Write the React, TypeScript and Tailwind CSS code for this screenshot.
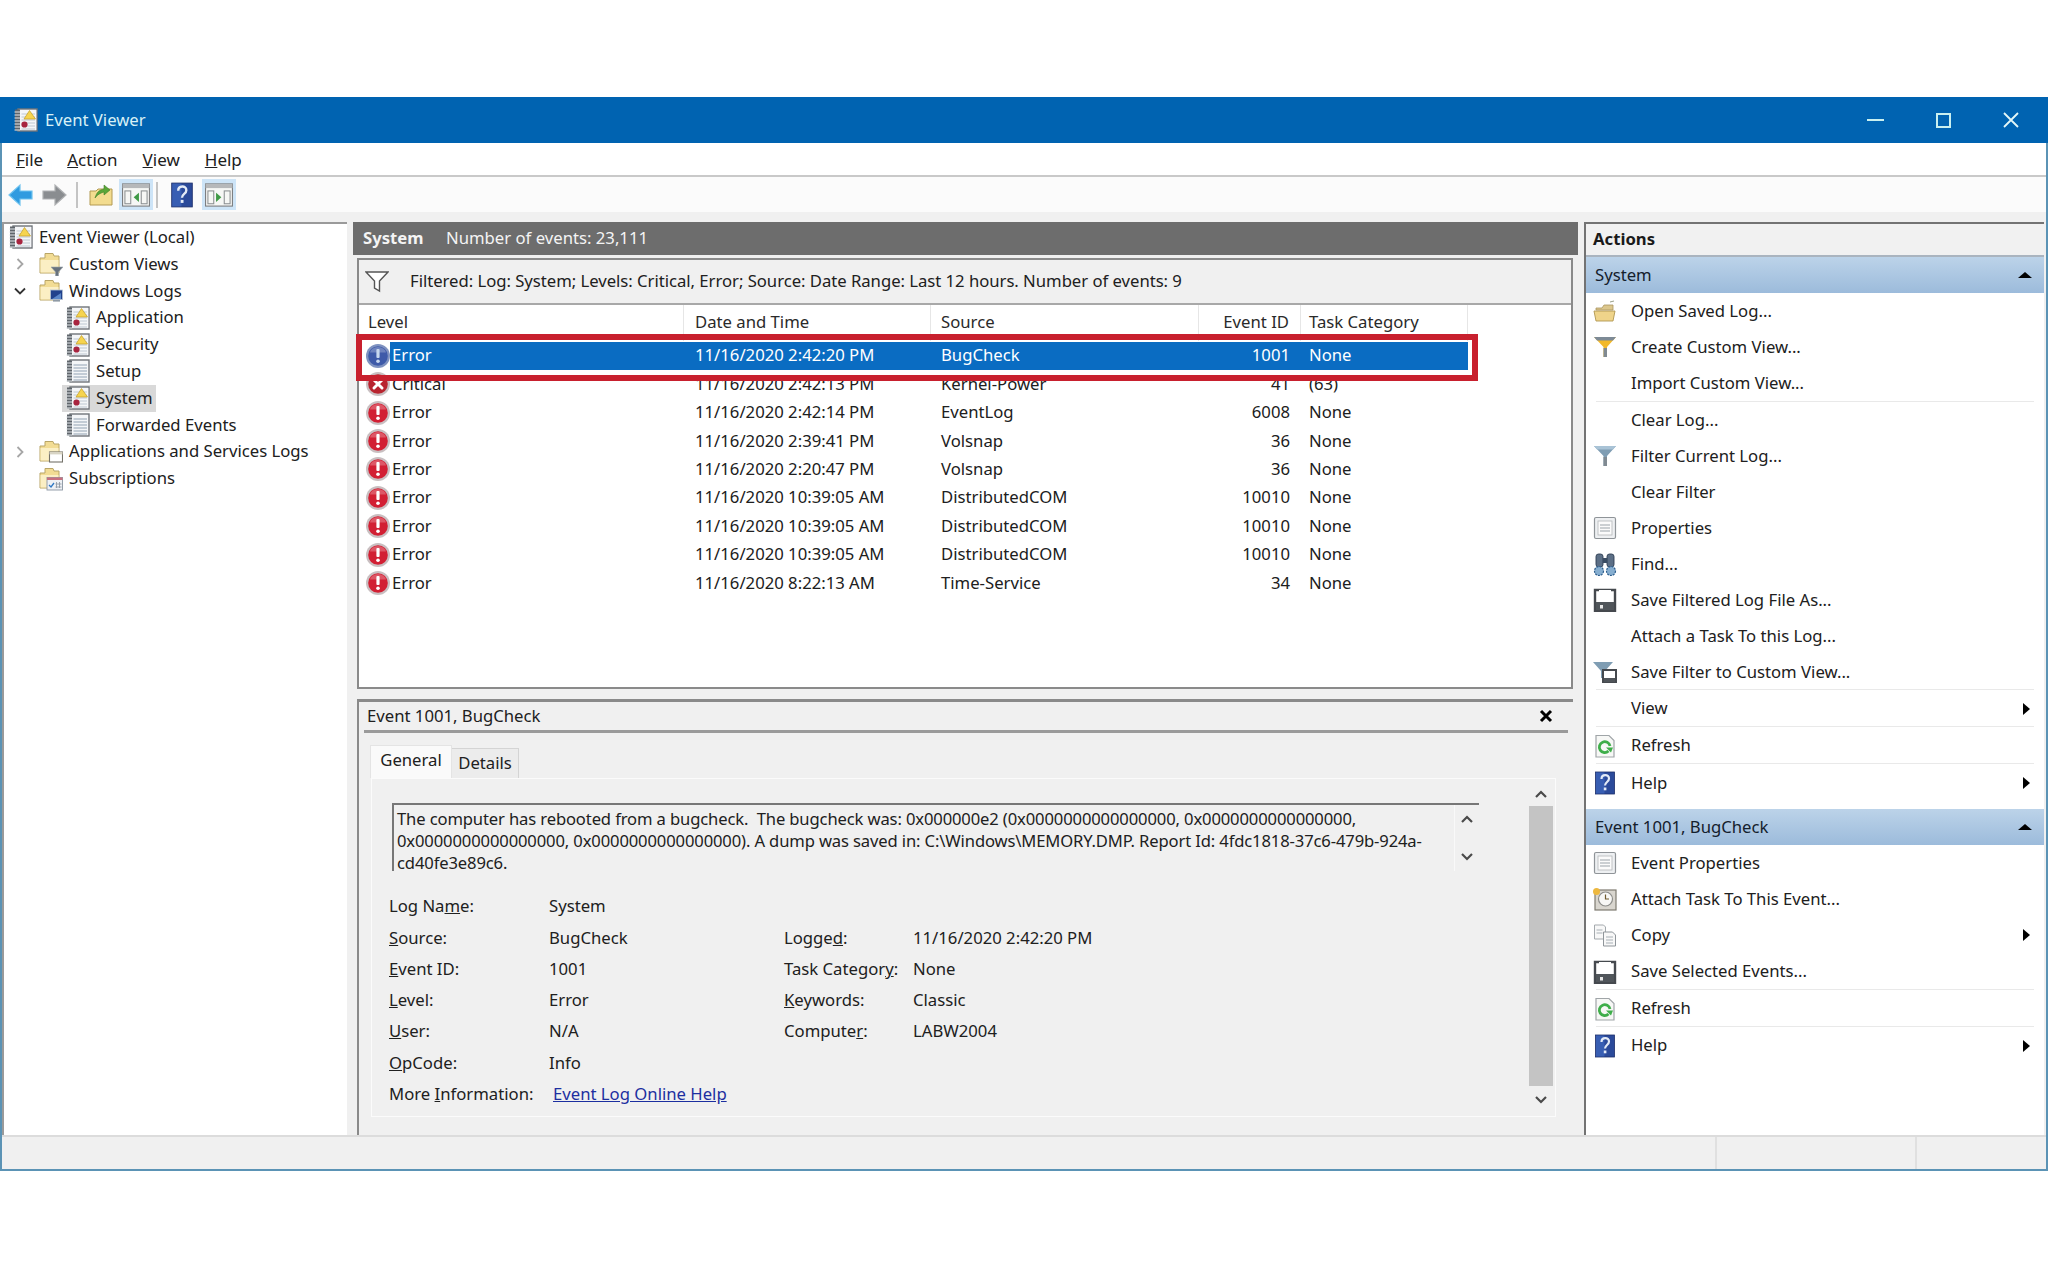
import type { ReactNode } from "react";

const FONT = "font-['Noto_Sans',sans-serif]";

function Svg({ size = 24, children }: { size?: number; children: ReactNode }) {
  return (
    <svg width={size} height={size} viewBox="0 0 24 24" className="shrink-0">
      {children}
    </svg>
  );
}

// Notebook with spiral on the left. "badge" adds the warning triangle and red dot.
function LogIcon({ badge = false, size = 24 }: { badge?: boolean; size?: number }) {
  return (
    <Svg size={size}>
      <rect x="4" y="1" width="19" height="22" fill="#f4f6f8" stroke="#6f7479" strokeWidth="1.4" />
      <rect x="1" y="1.5" width="5" height="21" fill="#5f656b" />
      {[4, 7, 10, 13, 16, 19, 22].map((y) => (
        <line key={y} x1="0.5" y1={y} x2="6" y2={y} stroke="#d8dde0" strokeWidth="1.1" />
      ))}
      {[6, 9, 12, 15, 18, 21].map((y) => (
        <line key={y} x1="7.5" y1={y} x2="21" y2={y} stroke="#a2b1bf" strokeWidth="1.2" />
      ))}
      {badge && (
        <>
          <rect x="7" y="2" width="15.5" height="20" fill="#f4f6f8" opacity="0.45" />
          <polygon points="15.5,2.5 21.5,11 10,11" fill="#f6d44f" stroke="#c29c25" strokeWidth="0.7" />
          <circle cx="10.5" cy="16.5" r="3.1" fill="#a82540" />
        </>
      )}
    </Svg>
  );
}

function FolderBase() {
  return (
    <>
      <path d="M6 1.5h8l1 2.5h5v17H1V6h5z" fill="#f2dc94" stroke="#b9a566" strokeWidth="1" />
      <path d="M1.5 8h18v12.5h-18z" fill="#fbefc4" />
    </>
  );
}

function FolderIcon({ kind }: { kind: "filter" | "monitor" | "window" | "cal" }) {
  return (
    <Svg>
      <FolderBase />
      {kind === "filter" && <polygon points="12,15 24,15 19.5,20 19.5,24 16.5,24 16.5,20" fill="#68727d" stroke="#9aa4ad" strokeWidth="0.6" />}
      {kind === "monitor" && (
        <>
          <rect x="11.5" y="11" width="12" height="9.5" fill="#21418c" stroke="#b7c4d2" strokeWidth="0.8" />
          <polygon points="13,20 22,20 22,14" fill="#5b87c9" />
          <rect x="14" y="21" width="7" height="1.6" fill="#8f9aa5" />
        </>
      )}
      {kind === "window" && (
        <>
          <rect x="10.5" y="12" width="13" height="10" fill="#ffffff" stroke="#74726a" strokeWidth="1.1" />
          <rect x="10.5" y="12" width="13" height="2.4" fill="#d8d4c4" />
        </>
      )}
      {kind === "cal" && (
        <>
          <rect x="8" y="10.5" width="15.5" height="12.5" fill="#eef1f5" stroke="#8b96a2" strokeWidth="0.9" />
          <rect x="8" y="10.5" width="15.5" height="2.5" fill="#c8707f" />
          <path d="M10 18l2 2 3-4" fill="none" stroke="#2f78c4" strokeWidth="1.3" />
          <path d="M17.5 15v6M20.5 15v6M16.5 17h6M16.5 20h6" stroke="#909aa6" strokeWidth="0.9" />
        </>
      )}
    </Svg>
  );
}

function ErrorIcon({ selected = false }: { selected?: boolean }) {
  return (
    <Svg>
      <circle cx="12" cy="12" r="12" fill={selected ? "#7f92c0" : "#c9bfc1"} />
      <circle cx="12" cy="12" r="9.8" fill={selected ? "#3e5aa9" : "#d21f33"} />
      <path d="M12 3a9 6.5 0 0 1 8 5.5H4a9 6.5 0 0 1 8-5.5z" fill="#ffffff" opacity="0.25" />
      <rect x="10.4" y="5" width="3.2" height="9" rx="1" fill={selected ? "#c8d8ef" : "#ffffff"} />
      <circle cx="12" cy="17.3" r="1.8" fill={selected ? "#c8d8ef" : "#ffffff"} />
    </Svg>
  );
}

function CriticalIcon() {
  return (
    <Svg>
      <circle cx="12" cy="12" r="12" fill="#c9bfc1" />
      <circle cx="12" cy="12" r="9.8" fill="#b8242f" />
      <path d="M8 8l8 8M16 8l-8 8" stroke="#ffffff" strokeWidth="3" strokeLinecap="round" />
    </Svg>
  );
}

function HelpIcon({ size = 24 }: { size?: number }) {
  return (
    <Svg size={size}>
      <rect x="2.5" y="1" width="19" height="22" fill="#2b4a9a" stroke="#1d2f6a" strokeWidth="0.8" />
      <rect x="3" y="1.5" width="8.5" height="21" fill="#3f66bd" opacity="0.7" />
      <path d="M8.5 8c0-5 7.5-5 7.5-.5 0 3.5-4 3.5-4 7" fill="none" stroke="#e4ebf7" strokeWidth="2.2" />
      <rect x="10.8" y="16.5" width="2.6" height="2.8" fill="#e4ebf7" />
    </Svg>
  );
}

function PaneIcon({ side }: { side: "left" | "right" }) {
  return (
    <Svg size={28}>
      <rect x="0.5" y="2.5" width="23" height="19" fill="#f6f7f5" stroke="#77797a" strokeWidth="0.9" />
      <rect x="0.5" y="2.5" width="23" height="3.6" fill="#b6b8ba" />
      <rect x="2.5" y="8.5" width="5" height="11" fill="none" stroke="#8b9092" strokeWidth="0.9" />
      <rect x="16.5" y="8.5" width="5" height="11" fill="none" stroke="#8b9092" strokeWidth="0.9" />
      <polygon points={side === "left" ? "14.5,10 14.5,18 10,14" : "9.5,10 9.5,18 14,14"} fill="#3f9a46" />
    </Svg>
  );
}

function ArrowIcon({ dir }: { dir: "back" | "forward" }) {
  const back = dir === "back";
  return (
    <svg width="26" height="24" viewBox="0 0 26 24" className="shrink-0">
      <path
        d={back ? "M1 12L12 2v6h12v8H12v6z" : "M25 12L14 2v6H2v8h12v6z"}
        fill={back ? "#2f9be0" : "#8a8d90"}
        stroke={back ? "#6fc3ef" : "#b0b2b4"}
        strokeWidth="1.2"
      />
    </svg>
  );
}

function UpFolderIcon() {
  return (
    <Svg>
      <path d="M1 8h6l2-2h14v16H1z" fill="#f3dc8f" stroke="#b39a52" strokeWidth="1" />
      <path d="M6 15C8 8 11 7 15 6V2l6 5-6 5V9c-3 1-6 2-9 6z" fill="#5aa638" stroke="#3f7f28" strokeWidth="0.6" />
    </Svg>
  );
}

function FunnelIcon({ tone }: { tone: "yellow" | "blue" }) {
  return (
    <Svg>
      <polygon points="1,2 23,2 14,12 14,22 10.5,22 10.5,12" fill={tone === "yellow" ? "#f2b92b" : "#7f9db3"} />
      <polygon points="1,2 23,2 20,5.5 4,5.5" fill={tone === "yellow" ? "#7d8a96" : "#a9c3d6"} />
      <rect x="10.5" y="13" width="3.5" height="9" fill="#808a92" />
    </Svg>
  );
}

function OpenIcon() {
  return (
    <Svg>
      <path d="M3 9h6l2-3h9v5H3z" fill="#dcc78d" stroke="#a99560" strokeWidth="0.8" />
      <path d="M1 12h21l-2 10H3z" fill="#efd48a" stroke="#b09650" strokeWidth="0.9" />
      <path d="M17 3l4-1" stroke="#9aa08a" strokeWidth="1" />
    </Svg>
  );
}

function PropsIcon() {
  return (
    <Svg>
      <rect x="1.5" y="1.5" width="21" height="21" rx="1.5" fill="#eef0f2" stroke="#8f9498" strokeWidth="1.2" />
      <rect x="5" y="5" width="14" height="14" fill="#fbfbfb" stroke="#b3b7ba" strokeWidth="0.8" />
      <path d="M7 9h10M7 12h10M7 15h10" stroke="#9ba3aa" strokeWidth="1.1" />
    </Svg>
  );
}

function FindIcon() {
  return (
    <Svg>
      <rect x="3" y="2" width="7" height="13" rx="2.5" fill="#5c6f86" stroke="#2d3d52" strokeWidth="0.9" />
      <rect x="14" y="2" width="7" height="13" rx="2.5" fill="#5c6f86" stroke="#2d3d52" strokeWidth="0.9" />
      <rect x="10" y="6" width="4" height="5" fill="#3a4c62" />
      <circle cx="6" cy="19" r="4.5" fill="#86aed0" stroke="#2d5d8c" strokeWidth="1.2" strokeDasharray="2 1" />
      <circle cx="18" cy="19" r="4.5" fill="#86aed0" stroke="#2d5d8c" strokeWidth="1.2" strokeDasharray="2 1" />
    </Svg>
  );
}

function SaveIcon() {
  return (
    <Svg>
      <path d="M2 2h20v21H2z" fill="#ffffff" stroke="#45494e" strokeWidth="2.4" />
      <rect x="6" y="2" width="12" height="11" fill="#ffffff" />
      <rect x="3" y="14" width="18" height="8" fill="#50555a" />
      <rect x="7" y="17" width="3" height="3.5" fill="#e8e8e8" />
    </Svg>
  );
}

function SaveFilterIcon() {
  return (
    <Svg>
      <polygon points="0,2 20,2 12,11 12,18 8,18 8,11" fill="#7f9db3" />
      <rect x="10" y="10" width="13" height="12" fill="#ffffff" stroke="#45494e" strokeWidth="2" />
      <rect x="11" y="18" width="11" height="4" fill="#50555a" />
    </Svg>
  );
}

function RefreshIcon() {
  return (
    <Svg>
      <path d="M3 1.5h13l5 5V23H3z" fill="#f7f8f6" stroke="#a0a5a8" strokeWidth="1.2" />
      <path d="M17 12a5.4 5.4 0 1 0-1.5 5" fill="none" stroke="#3fae4a" strokeWidth="2.8" />
      <polygon points="13,13.5 20,13.5 18,18.5" fill="#3fae4a" />
    </Svg>
  );
}

function TaskIcon() {
  return (
    <Svg>
      <rect x="2" y="3" width="21" height="20" fill="#d9d6cf" stroke="#7e7a70" strokeWidth="1.2" />
      <circle cx="12.5" cy="12" r="7" fill="#f7f7f5" stroke="#8d8d8a" strokeWidth="1.2" />
      <path d="M12.5 7.5V12h3.5" fill="none" stroke="#705a2d" strokeWidth="1.2" />
      <circle cx="3.5" cy="4.5" r="3.5" fill="#edb83f" />
    </Svg>
  );
}

function CopyIcon() {
  return (
    <Svg>
      <path d="M1.5 2h9l2 2v12h-11z" fill="#f8f8f8" stroke="#a4a9ad" strokeWidth="1" />
      <path d="M10.5 9h9l3 3v11h-12z" fill="#f8f8f8" stroke="#8f959a" strokeWidth="1" />
      <path d="M3.5 7h6M3.5 10h6M13 14h7M13 17h7M13 20h7" stroke="#a8b0b6" strokeWidth="1" />
    </Svg>
  );
}

function CaretRight() {
  return <span className="ml-auto mr-[14px] h-0 w-0 border-y-[6px] border-l-[7px] border-y-transparent border-l-black" />;
}

function SectionHeader({ title }: { title: string }) {
  return (
    <div className="flex h-[36px] shrink-0 items-center justify-between bg-gradient-to-b from-[#bcd3e9] to-[#9cbbdb] pl-[9px] pr-[12px] text-[#14202c]">
      <span>{title}</span>
      <span className="h-0 w-0 border-x-[7px] border-b-[6px] border-x-transparent border-b-black" />
    </div>
  );
}

type Action = {
  label: string;
  icon?: ReactNode;
  sub?: boolean;
  h?: string;
  sep?: boolean;
};

const systemActions: Action[] = [
  { label: "Open Saved Log...", icon: <OpenIcon /> },
  { label: "Create Custom View...", icon: <FunnelIcon tone="yellow" /> },
  { label: "Import Custom View...", sep: true, h: "h-[37px]" },
  { label: "Clear Log..." },
  { label: "Filter Current Log...", icon: <FunnelIcon tone="blue" /> },
  { label: "Clear Filter" },
  { label: "Properties", icon: <PropsIcon /> },
  { label: "Find...", icon: <FindIcon /> },
  { label: "Save Filtered Log File As...", icon: <SaveIcon /> },
  { label: "Attach a Task To this Log..." },
  { label: "Save Filter to Custom View...", icon: <SaveFilterIcon />, sep: true },
  { label: "View", sub: true, sep: true, h: "h-[37px]" },
  { label: "Refresh", icon: <RefreshIcon />, sep: true, h: "h-[37px]" },
  { label: "Help", icon: <HelpIcon />, sub: true, h: "h-[45px] pb-[7px]" },
];

const eventActions: Action[] = [
  { label: "Event Properties", icon: <PropsIcon /> },
  { label: "Attach Task To This Event...", icon: <TaskIcon /> },
  { label: "Copy", icon: <CopyIcon />, sub: true },
  { label: "Save Selected Events...", icon: <SaveIcon />, sep: true, h: "h-[37px]" },
  { label: "Refresh", icon: <RefreshIcon />, sep: true, h: "h-[37px]" },
  { label: "Help", icon: <HelpIcon />, sub: true, h: "h-[37px]" },
];

function ActionRow({ a }: { a: Action }) {
  return (
    <div className={`relative flex shrink-0 items-center ${a.h ?? "h-[36px]"}`}>
      <span className="flex w-[45px] shrink-0 justify-start pl-[7px]">{a.icon}</span>
      <span className="whitespace-nowrap">{a.label}</span>
      {a.sub && <CaretRight />}
      {a.sep && <span className="absolute inset-x-[10px] bottom-0 h-px bg-[#e9e9e9]" />}
    </div>
  );
}

const rows = [
  { level: "Critical", date: "11/16/2020 2:42:13 PM", source: "Kernel-Power", id: "41", task: "(63)" },
  { level: "Error", date: "11/16/2020 2:42:14 PM", source: "EventLog", id: "6008", task: "None" },
  { level: "Error", date: "11/16/2020 2:39:41 PM", source: "Volsnap", id: "36", task: "None" },
  { level: "Error", date: "11/16/2020 2:20:47 PM", source: "Volsnap", id: "36", task: "None" },
  { level: "Error", date: "11/16/2020 10:39:05 AM", source: "DistributedCOM", id: "10010", task: "None" },
  { level: "Error", date: "11/16/2020 10:39:05 AM", source: "DistributedCOM", id: "10010", task: "None" },
  { level: "Error", date: "11/16/2020 10:39:05 AM", source: "DistributedCOM", id: "10010", task: "None" },
  { level: "Error", date: "11/16/2020 8:22:13 AM", source: "Time-Service", id: "34", task: "None" },
];

const GRID = "grid grid-cols-[325px_247px_268px_102px_167px]";

function Chevron({ open }: { open?: boolean }) {
  return (
    <svg width="14" height="14" viewBox="0 0 14 14" className="shrink-0">
      <path
        d={open ? "M2 4.5l5 5 5-5" : "M4.5 2l5 5-5 5"}
        fill="none"
        stroke={open ? "#333333" : "#a6a6a6"}
        strokeWidth="1.8"
      />
    </svg>
  );
}

function TreeRow({ children, icon, pl, chevron, active }: { children: ReactNode; icon: ReactNode; pl: string; chevron?: ReactNode; active?: boolean }) {
  return (
    <div className={`flex h-[26.8px] items-center ${pl}`}>
      {chevron && <span className="mr-[8px] flex w-[14px] justify-center">{chevron}</span>}
      <span className={`flex h-full items-center gap-[6px] pl-[4px] pr-[3px] ${active ? "bg-[#d9d9d9]" : ""}`}>
        {icon}
        <span className="whitespace-nowrap">{children}</span>
      </span>
    </div>
  );
}

function Field({ label, u, rest, value }: { label?: string; u: string; rest: string; value: string }) {
  return (
    <>
      <span className="whitespace-nowrap">
        {label}
        <u>{u}</u>
        {rest}
      </span>
      <span className="whitespace-nowrap">{value}</span>
    </>
  );
}

function ScrollArrow({ up }: { up?: boolean }) {
  return (
    <svg width="14" height="10" viewBox="0 0 14 10">
      <path d={up ? "M2 8l5-5 5 5" : "M2 2l5 5 5-5"} fill="none" stroke="#4a4a4a" strokeWidth="2.2" />
    </svg>
  );
}

export default function App() {
  return (
    <div className={`h-[1268px] bg-white pt-[97px] text-[16.7px] leading-none text-[#202020] ${FONT}`}>
      <div className="flex h-[1074px] flex-col border-b-2 border-l-2 border-r-2 border-[#5b93b5] bg-[#f0f0f0]">
        {/* title bar */}
        <div className="-mx-[2px] flex h-[46px] shrink-0 items-center bg-[#0063b1] pl-[14px] pr-[3px] text-[#d8f1f6]">
          <LogIcon badge size={24} />
          <span className="ml-[7px]">Event Viewer</span>
          <div className="ml-auto flex">
            <span className="flex h-[46px] w-[68px] items-center justify-center">
              <span className="h-[2px] w-[17px] bg-[#c9f0f0]" />
            </span>
            <span className="flex h-[46px] w-[68px] items-center justify-center">
              <span className="h-[15px] w-[15px] border-2 border-[#c9f0f0]" />
            </span>
            <span className="flex h-[46px] w-[68px] items-center justify-center">
              <svg width="16" height="16" viewBox="0 0 16 16">
                <path d="M1 1l14 14M15 1L1 15" stroke="#e4f7f7" strokeWidth="1.8" />
              </svg>
            </span>
          </div>
        </div>

        {/* menu */}
        <div className="flex h-[34px] shrink-0 items-center gap-[23px] border-b-2 border-[#c9c9c9] bg-white pl-[14px] text-[17px]">
          <span>
            <u>F</u>ile
          </span>
          <span className="ml-[1px]">
            <u>A</u>ction
          </span>
          <span className="ml-[2px]">
            <u>V</u>iew
          </span>
          <span className="ml-[2px]">
            <u>H</u>elp
          </span>
        </div>

        {/* toolbar */}
        <div className="flex h-[35px] shrink-0 items-center bg-[#fbfbfb] pl-[6px]">
          <ArrowIcon dir="back" />
          <span className="ml-[7px]">
            <ArrowIcon dir="forward" />
          </span>
          <span className="ml-[9px] h-[26px] w-[2px] bg-[#c4c4c4]" />
          <span className="ml-[11px]">
            <UpFolderIcon />
          </span>
          <span className="ml-[6px] flex h-[31px] w-[34px] items-center justify-center bg-[#cde4f7]">
            <PaneIcon side="left" />
          </span>
          <span className="ml-[3px] h-[26px] w-[2px] bg-[#c4c4c4]" />
          <span className="ml-[11px]">
            <HelpIcon size={26} />
          </span>
          <span className="ml-[7px] flex h-[31px] w-[34px] items-center justify-center bg-[#cde4f7]">
            <PaneIcon side="right" />
          </span>
        </div>

        {/* panes */}
        <div className="flex min-h-0 flex-1 gap-[6px] pt-[10px]">
          {/* tree */}
          <div className="w-[345px] shrink-0 border-l-2 border-t-2 border-[#9a9a9a] bg-white">
            <TreeRow pl="pl-[1px]" icon={<LogIcon badge />}>
              Event Viewer (Local)
            </TreeRow>
            <TreeRow pl="pl-[9px]" chevron={<Chevron />} icon={<FolderIcon kind="filter" />}>
              Custom Views
            </TreeRow>
            <TreeRow pl="pl-[9px]" chevron={<Chevron open />} icon={<FolderIcon kind="monitor" />}>
              Windows Logs
            </TreeRow>
            <TreeRow pl="pl-[58px]" icon={<LogIcon badge />}>
              Application
            </TreeRow>
            <TreeRow pl="pl-[58px]" icon={<LogIcon badge />}>
              Security
            </TreeRow>
            <TreeRow pl="pl-[58px]" icon={<LogIcon />}>
              Setup
            </TreeRow>
            <TreeRow pl="pl-[58px]" icon={<LogIcon badge />} active>
              System
            </TreeRow>
            <TreeRow pl="pl-[58px]" icon={<LogIcon />}>
              Forwarded Events
            </TreeRow>
            <TreeRow pl="pl-[9px]" chevron={<Chevron />} icon={<FolderIcon kind="window" />}>
              Applications and Services Logs
            </TreeRow>
            <TreeRow pl="pl-[31px]" icon={<FolderIcon kind="cal" />}>
              Subscriptions
            </TreeRow>
          </div>

          {/* center */}
          <div className="flex w-[1225px] shrink-0 flex-col">
            <div className="flex h-[33px] shrink-0 items-center bg-[#6d6d6d] pl-[10px] text-[#f4f4f4]">
              <span className="w-[83px] font-bold">System</span>
              <span>Number of events: 23,111</span>
            </div>

            <div className="ml-[4px] mr-[5px] mt-[3px] flex h-[431px] shrink-0 flex-col border-2 border-[#8a8a8a] bg-white">
              <div className="flex h-[45px] shrink-0 items-center border-b-2 border-[#a8a8a8] bg-[#f0f0f0] pl-[6px]">
                <svg width="24" height="22" viewBox="0 0 24 22" className="shrink-0">
                  <path d="M1 1h22l-8.5 9v10l-5-3v-7z" fill="#ffffff" stroke="#555555" strokeWidth="1.4" />
                </svg>
                <span className="ml-[21px] whitespace-nowrap tracking-[-0.03px]">
                  Filtered: Log: System; Levels: Critical, Error; Source: Date Range: Last 12 hours. Number of events: 9
                </span>
              </div>

              <div className={`${GRID} h-[36.6px] shrink-0 pb-[1px] text-[#2a2a2a]`}>
                <span className="flex items-center border-r border-[#e6e6e6] pl-[9px]">Level</span>
                <span className="flex items-center border-r border-[#e6e6e6] pl-[11px]">Date and Time</span>
                <span className="flex items-center border-r border-[#e6e6e6] pl-[10px]">Source</span>
                <span className="flex items-center justify-end border-r border-[#e6e6e6] pr-[11px]">Event ID</span>
                <span className="flex items-center border-r border-[#e6e6e6] pl-[8px]">Task Category</span>
              </div>

              <div className="relative">
                <div className={`${GRID} h-[28.4px] items-stretch text-white`}>
                  <span className="flex items-center pl-[7px]">
                    <ErrorIcon selected />
                    <span className="flex h-full flex-1 items-center bg-[#0a6cc2] pl-[2px]">Error</span>
                  </span>
                  <span className="flex items-center bg-[#0a6cc2] pl-[11px]">11/16/2020 2:42:20 PM</span>
                  <span className="flex items-center bg-[#0a6cc2] pl-[10px]">BugCheck</span>
                  <span className="flex items-center justify-end bg-[#0a6cc2] pr-[11px]">1001</span>
                  <span className="flex items-center bg-[#0a6cc2] pl-[8px]">None</span>
                </div>
                {rows.map((r, i) => (
                  <div key={i} className={`${GRID} h-[28.4px] items-center`}>
                    <span className="flex items-center gap-[2px] pl-[7px]">
                      {r.level === "Critical" ? <CriticalIcon /> : <ErrorIcon />}
                      {r.level}
                    </span>
                    <span className="pl-[11px]">{r.date}</span>
                    <span className="pl-[10px]">{r.source}</span>
                    <span className="pr-[11px] text-right">{r.id}</span>
                    <span className="pl-[8px]">{r.task}</span>
                  </div>
                ))}
                {/* annotation drawn over the selected row */}
                <div className="absolute -left-[3px] -top-[8px] h-[47px] w-[1122px] border-[6px] border-[#c8202e]" />
              </div>
            </div>

            {/* event detail */}
            <div className="ml-[4px] mr-[5px] mt-[10px] flex min-h-0 flex-1 flex-col border-l-2 border-t-[3px] border-[#8a8a8a] pb-[18px]">
              <div className="mx-[5px] flex h-[31px] shrink-0 items-center justify-between border-b-[3px] border-[#9a9a9a] pl-[3px] pr-[15px]">
                <span>Event 1001, BugCheck</span>
                <svg width="14" height="14" viewBox="0 0 14 14">
                  <path d="M2 2l10 10M12 2L2 12" stroke="#000000" strokeWidth="3" />
                </svg>
              </div>

              <div className="ml-[11px] mt-[12px] flex h-[33px] shrink-0 items-end">
                <span className="flex h-[33px] w-[82px] items-center justify-center border-x border-t border-[#e4e4e4] bg-[#fafafa] pb-[3px]">
                  General
                </span>
                <span className="flex h-[30px] w-[67px] items-center justify-center border-r border-t border-[#d4d4d4] bg-[#ececec]">
                  Details
                </span>
              </div>

              <div className="ml-[12px] mr-[17px] flex min-h-0 flex-1 border border-[#fbfbfb] pb-[2px] pl-[20px] pr-[2px] pt-[24px]">
                <div className="min-w-0 flex-1">
                  <div className="flex h-[68px] w-[1087px] border-l-2 border-t-2 border-[#777777]">
                    <div className="flex-1 pl-[3px] pt-[3px] leading-[22px] tracking-[-0.13px] whitespace-pre text-[16.6px]">
                      <div>The computer has rebooted from a bugcheck.  The bugcheck was: 0x000000e2 (0x0000000000000000, 0x0000000000000000,</div>
                      <div>0x0000000000000000, 0x0000000000000000). A dump was saved in: C:\Windows\MEMORY.DMP. Report Id: 4fdc1818-37c6-479b-924a-</div>
                      <div>cd40fe3e89c6.</div>
                    </div>
                    <div className="flex w-[25px] shrink-0 flex-col items-center justify-between border-l border-[#f9f9f9] py-[9px]">
                      <ScrollArrow up />
                      <ScrollArrow />
                    </div>
                  </div>

                  <div className="-ml-[3px] mt-[20px] grid grid-cols-[160px_235px_129px_1fr] grid-rows-[repeat(7,31.3px)] items-center">
                    <Field label="Log Na" u="m" rest="e:" value="System" />
                    <span />
                    <span />
                    <Field u="S" rest="ource:" value="BugCheck" />
                    <Field label="Logge" u="d" rest=":" value="11/16/2020 2:42:20 PM" />
                    <Field u="E" rest="vent ID:" value="1001" />
                    <Field label="Task Categor" u="y" rest=":" value="None" />
                    <Field u="L" rest="evel:" value="Error" />
                    <Field u="K" rest="eywords:" value="Classic" />
                    <Field u="U" rest="ser:" value="N/A" />
                    <Field label="Compute" u="r" rest=":" value="LABW2004" />
                    <Field u="O" rest="pCode:" value="Info" />
                    <span />
                    <span />
                    <span className="whitespace-nowrap">
                      More <u>I</u>nformation:
                    </span>
                    <span className="col-span-3 pl-[4px] whitespace-nowrap text-[#1c2fa0] underline">Event Log Online Help</span>
                  </div>
                </div>
                <div className="-mt-[21px] flex w-[24px] shrink-0 flex-col items-center">
                  <span className="flex h-[24px] items-center">
                    <ScrollArrow up />
                  </span>
                  <span className="w-full flex-1 bg-[#c4c4c4]" />
                  <span className="flex h-[28px] items-center">
                    <ScrollArrow />
                  </span>
                </div>
              </div>
            </div>
          </div>

          {/* actions */}
          <div className="flex w-[460px] shrink-0 flex-col border-l-2 border-t-2 border-[#737373] bg-white">
            <div className="flex h-[33px] shrink-0 items-center border-b-2 border-[#aab4bf] bg-[#f1f1f1] pl-[7px] font-bold text-[#1a1a1a]">
              Actions
            </div>
            <SectionHeader title="System" />
            {systemActions.map((a) => (
              <ActionRow key={a.label} a={a} />
            ))}
            <SectionHeader title="Event 1001, BugCheck" />
            {eventActions.map((a) => (
              <ActionRow key={a.label} a={a} />
            ))}
          </div>
        </div>

        {/* status bar */}
        <div className="flex h-[34px] shrink-0 border-t-2 border-[#dcdcdc] bg-[#f0f0f0]">
          <span className="w-[1715px] border-r-2 border-[#e0e0e0]" />
          <span className="w-[200px] border-r-2 border-[#e0e0e0]" />
        </div>
      </div>
    </div>
  );
}
